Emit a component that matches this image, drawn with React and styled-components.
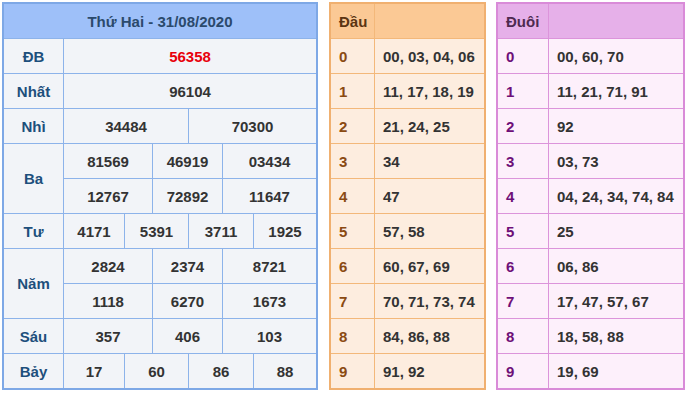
import React from 'react';
import styled, { createGlobalStyle } from 'styled-components';

const GlobalStyle = createGlobalStyle`
  html, body {
    margin: 0;
    padding: 0;
    background: #ffffff;
  }
  body {
    padding: 2px 0 0 2px;
    font-family: "Liberation Sans", Arial, sans-serif;
  }
`;

const Page = styled.div`
  display: flex;
  align-items: flex-start;
`;

const ResultGrid = styled.div`
  display: grid;
  grid-template-columns: 59px 60px 27px 35px 33px 30px 62px;
  grid-auto-rows: 34px;
  gap: 1px;
  background: #8db3ea;
  border: 2px solid #7ea8e6;
  margin-right: 11px;
`;

const Cell = styled.div`
  display: flex;
  align-items: center;
  justify-content: center;
  background: #f2f4f8;
  font-size: 15px;
  font-weight: bold;
  color: ${p => (p.$red ? '#e8000b' : '#333333')};
  grid-column: span ${p => p.$span || 1};
  grid-row: span ${p => p.$rows || 1};
`;

const Title = styled(Cell)`
  background: #9ec0f9;
  color: #2b4a6c;
`;

const Label = styled(Cell)`
  color: #1d4f7c;
`;

const LotoGrid = styled.div`
  display: grid;
  grid-template-columns: ${p => p.$cols};
  grid-auto-rows: 34px;
  gap: 1px;
  background: ${p => p.$line};
  border: 2px solid ${p => p.$edge};
  margin-right: ${p => p.$mr || 0}px;
`;

const LotoCell = styled.div`
  display: flex;
  align-items: center;
  padding-left: 8px;
  background: ${p => (p.$head ? p.$headBg : p.$bg)};
  font-size: 15px;
  font-weight: bold;
  color: ${p => p.$color || '#333333'};
`;

const prizes = [
  { label: 'ĐB', rows: [[[6, '56358', true]]] },
  { label: 'Nhất', rows: [[[6, '96104']]] },
  { label: 'Nhì', rows: [[[3, '34484'], [3, '70300']]] },
  {
    label: 'Ba',
    rows: [
      [[2, '81569'], [2, '46919'], [2, '03434']],
      [[2, '12767'], [2, '72892'], [2, '11647']],
    ],
  },
  { label: 'Tư', rows: [[[1, '4171'], [2, '5391'], [2, '3711'], [1, '1925']]] },
  {
    label: 'Năm',
    rows: [
      [[2, '2824'], [2, '2374'], [2, '8721']],
      [[2, '1118'], [2, '6270'], [2, '1673']],
    ],
  },
  { label: 'Sáu', rows: [[[2, '357'], [2, '406'], [2, '103']]] },
  { label: 'Bảy', rows: [[[1, '17'], [2, '60'], [2, '86'], [1, '88']]] },
];

const dau = [
  '00, 03, 04, 06',
  '11, 17, 18, 19',
  '21, 24, 25',
  '34',
  '47',
  '57, 58',
  '60, 67, 69',
  '70, 71, 73, 74',
  '84, 86, 88',
  '91, 92',
];

const duoi = [
  '00, 60, 70',
  '11, 21, 71, 91',
  '92',
  '03, 73',
  '04, 24, 34, 74, 84',
  '25',
  '06, 86',
  '17, 47, 57, 67',
  '18, 58, 88',
  '19, 69',
];

function LotoTable({ title, items, theme, cols, mr }) {
  const base = { $bg: theme.bg, $headBg: theme.head };
  return (
    <LotoGrid $cols={cols} $line={theme.line} $edge={theme.edge} $mr={mr}>
      <LotoCell {...base} $head $color={theme.headText}>{title}</LotoCell>
      <LotoCell {...base} $head />
      {items.map((v, i) => (
        <React.Fragment key={i}>
          <LotoCell {...base} $color={theme.digit}>{i}</LotoCell>
          <LotoCell {...base}>{v}</LotoCell>
        </React.Fragment>
      ))}
    </LotoGrid>
  );
}

const orange = {
  bg: '#fdeddf',
  head: '#fbc995',
  line: '#f3b87a',
  edge: '#f0b070',
  digit: '#8a4a12',
  headText: '#5b3512',
};

const purple = {
  bg: '#fdf0fb',
  head: '#e6b0e9',
  line: '#dc94db',
  edge: '#d98bd8',
  digit: '#6e0f78',
  headText: '#4e2a50',
};

export default function App() {
  return (
    <>
      <GlobalStyle />
      <Page>
        <ResultGrid>
          <Title $span={7}>Thứ Hai - 31/08/2020</Title>
          {prizes.map(p => (
            <React.Fragment key={p.label}>
              <Label $rows={p.rows.length}>{p.label}</Label>
              {p.rows.map((row, ri) =>
                row.map(([span, num, red], ci) => (
                  <Cell key={`${ri}-${ci}`} $span={span} $red={red}>
                    {num}
                  </Cell>
                ))
              )}
            </React.Fragment>
          ))}
        </ResultGrid>
        <LotoTable title="Đầu" items={dau} theme={orange} cols="43px 109px" mr={10} />
        <LotoTable title="Đuôi" items={duoi} theme={purple} cols="50px 134px" />
      </Page>
    </>
  );
}
